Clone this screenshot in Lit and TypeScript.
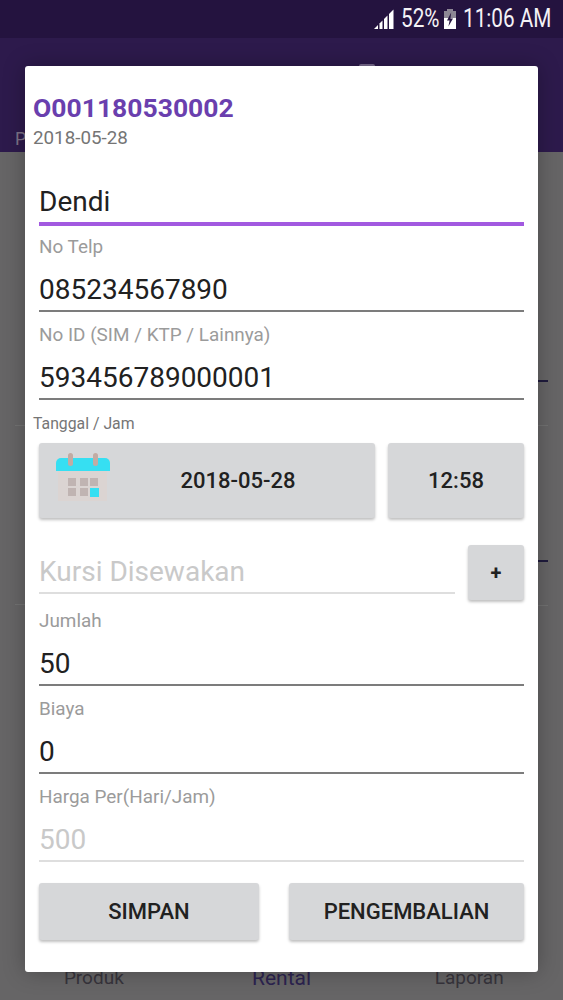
import { LitElement, html, css, svg } from "lit";
import { customElement } from "lit/decorators.js";

const signal = svg`<svg viewBox="0 0 20 20" width="20" height="20"><path d="M0 20l4-4v4z" fill="#fff"/><path d="M5.5 20v-5.5l3-3V20z" fill="#fff"/><path d="M10 20V10l3.5-3.5V20z" fill="#fff"/><path d="M15 20V5l4.5-4.5V20z" fill="#fff"/></svg>`;
const battery = svg`<svg viewBox="0 0 12 20" width="12" height="20"><path d="M3.5 0h5v2H12v18H0V2h3.5z" fill="#fff"/><path d="M3.5 0h5v2H12v7H0V2h3.5z" fill="#8c8794"/><path d="M7.2 3.5 3 11.5h2.6L4.4 17.5 9 9.5H6.4z" fill="#24133f"/></svg>`;
const calendar = svg`<svg viewBox="0 0 56 52" width="56" height="52">
  <rect x="3" y="16" width="49" height="32" fill="#dbd4d2"/>
  <path d="M1 18v-8a5 5 0 0 1 5-5h44a5 5 0 0 1 5 5v8z" fill="#36dff2"/>
  <rect x="13" y="0" width="5" height="13" rx="2.5" fill="#c2aba3"/><rect x="38" y="0" width="5" height="13" rx="2.5" fill="#c2aba3"/>
  ${[[13, 25], [25, 25], [35, 25], [13, 35], [25, 35]].map(([x, y]) => svg`<rect x=${x} y=${y} width="8" height="8" fill="#c0b4b2"/>`)}
  <rect x="35" y="35" width="9" height="9" fill="#36dff2"/>
</svg>`;

@customElement("app-root")
export class AppRoot extends LitElement {
  static styles = css`
    :host { display: block; width: 563px; height: 1000px; position: relative; overflow: hidden; background: #646464; font-family: Roboto, "Liberation Sans", sans-serif; }
    .status { height: 38px; background: #24133f; color: #f4f2f6; position: relative; font-size: 25px; }
    .status > * { position: absolute; }
    .status .t { transform: scaleX(.83); transform-origin: left center; line-height: 38px; top: 0; white-space: nowrap; }
    .bar { height: 114px; background: #2d1a4c; display: flex; align-items: flex-end; padding: 0 0 3px 15px; box-sizing: border-box; color: #7d7388; font-size: 18px; }
    .body { height: 848px; box-sizing: border-box; display: flex; flex-direction: column; background: #666566; }
    .spacer { flex: 1; }
    .nav { display: grid; grid-template-columns: 1fr 1fr 1fr; height: 34px; align-items: start; font-size: 19px; color: #37343c; box-sizing: border-box; }
    .nav span { text-align: center; line-height: 24px; }
    .nav .on { color: #2c2350; font-size: 21px; }
    .mark { position: absolute; width: 10px; height: 2px; left: 538px; background: #1f1b3d; }
    .faint { position: absolute; width: 10px; height: 1px; background: #727272; }
    .bump { position: absolute; left: 359px; top: 64px; width: 16px; height: 2px; border-radius: 8px 8px 0 0; background: #7a6c90; }
    .dialog { position: absolute; left: 25px; top: 66px; width: 513px; height: 906px; box-sizing: border-box; background: #fff; border-radius: 3px; padding: 0 14px; display: flex; flex-direction: column; box-shadow: 0 0 22px rgba(0,0,0,.28); }
    .title { margin: 27px 0 0 -6px; height: 30px; line-height: 30px; font-size: 26.5px; font-weight: 700; color: #6a3fae; }
    .date { margin-left: -6px; height: 30px; line-height: 30px; font-size: 18.8px; color: #757575; }
    .name { margin-top: 29px; height: 39px; line-height: 39px; font-size: 28px; color: #212121; }
    .focus { height: 4px; margin-top: 1px; background: #a259e0; }
    .label { height: 22px; line-height: 22px; font-size: 18.9px; color: #9b9b9b; }
    .value { height: 40px; line-height: 40px; font-size: 28px; color: #212121; margin-top: 12px; }
    .muted { color: #c9c9c9; }
    .line { height: 2px; background: #7c7c7c; }
    .line.pale { background: #dedede; }
    .field { padding-top: 12px; }
    .first { padding-top: 10px; }
    .tight { padding-top: 10px; }
    .cap { margin: 14px 0 0 -6px; height: 20px; line-height: 20px; font-size: 15.8px; color: #757575; }
    .btn { background: #d6d7d9; border-radius: 3px; box-shadow: 0 2px 3px rgba(0,0,0,.25); display: flex; align-items: center; justify-content: center; font-size: 22px; font-weight: 500; color: #212121; box-sizing: border-box; }
    .when { display: grid; grid-template-columns: 336px 136px; gap: 13px; height: 75px; margin-top: 9px; }
    .datebtn { position: relative; padding-left: 62px; }
    .datebtn svg { position: absolute; left: 16px; top: 10px; }
    .kursi { display: flex; gap: 13px; margin-top: 27px; height: 55px; }
    .kursi .col { flex: 1; display: flex; flex-direction: column; justify-content: flex-end; }
    .kursi .value { margin: 0; }
    .kursi .line { margin-bottom: 6px; }
    .plus { width: 56px; font-size: 20px; font-weight: 700; }
    .actions { display: grid; grid-template-columns: 220px 235px; justify-content: space-between; height: 57px; margin-top: 21px; }
  `;

  field(label: string, value: string, cls = "") {
    const off = cls.includes("off");
    return html`<div class="field ${cls}"><div class="label">${label}</div><div class="value ${off ? "muted" : ""}">${value}</div><div class="line ${off ? "pale" : ""}"></div></div>`;
  }

  render() {
    return html`
      <div class="status">
        <span style="left:374px;top:9px;display:flex">${signal}</span>
        <span class="t" style="left:401px">52%</span>
        <span style="left:444px;top:9px;display:flex">${battery}</span>
        <span class="t" style="left:463px">11:06 AM</span>
      </div>
      <div class="bar">P</div>
      <div class="body"><div class="spacer"></div><div class="nav"><span>Produk</span><span class="on">Rental</span><span>Laporan</span></div></div>
      <div class="mark" style="top:380px"></div><div class="mark" style="top:560px"></div>
      <div class="faint" style="left:538px;top:425px"></div><div class="faint" style="left:538px;top:605px"></div>
      <div class="faint" style="left:15px;top:425px"></div><div class="faint" style="left:15px;top:604px"></div>
      <div class="bump"></div>
      <div class="dialog">
        <div class="title">O001180530002</div>
        <div class="date">2018-05-28</div>
        <div class="name">Dendi</div>
        <div class="focus"></div>
        ${this.field("No Telp", "085234567890", "first")}
        ${this.field("No ID (SIM / KTP / Lainnya)", "593456789000001")}
        <div class="cap">Tanggal / Jam</div>
        <div class="when">
          <div class="btn datebtn">${calendar}2018-05-28</div>
          <div class="btn">12:58</div>
        </div>
        <div class="kursi">
          <div class="col"><div class="value muted">Kursi Disewakan</div><div class="line pale"></div></div>
          <div class="btn plus">+</div>
        </div>
        ${this.field("Jumlah", "50", "tight")}
        ${this.field("Biaya", "0")}
        ${this.field("Harga Per(Hari/Jam)", "500", "off")}
        <div class="actions"><div class="btn">SIMPAN</div><div class="btn">PENGEMBALIAN</div></div>
      </div>
    `;
  }
}
